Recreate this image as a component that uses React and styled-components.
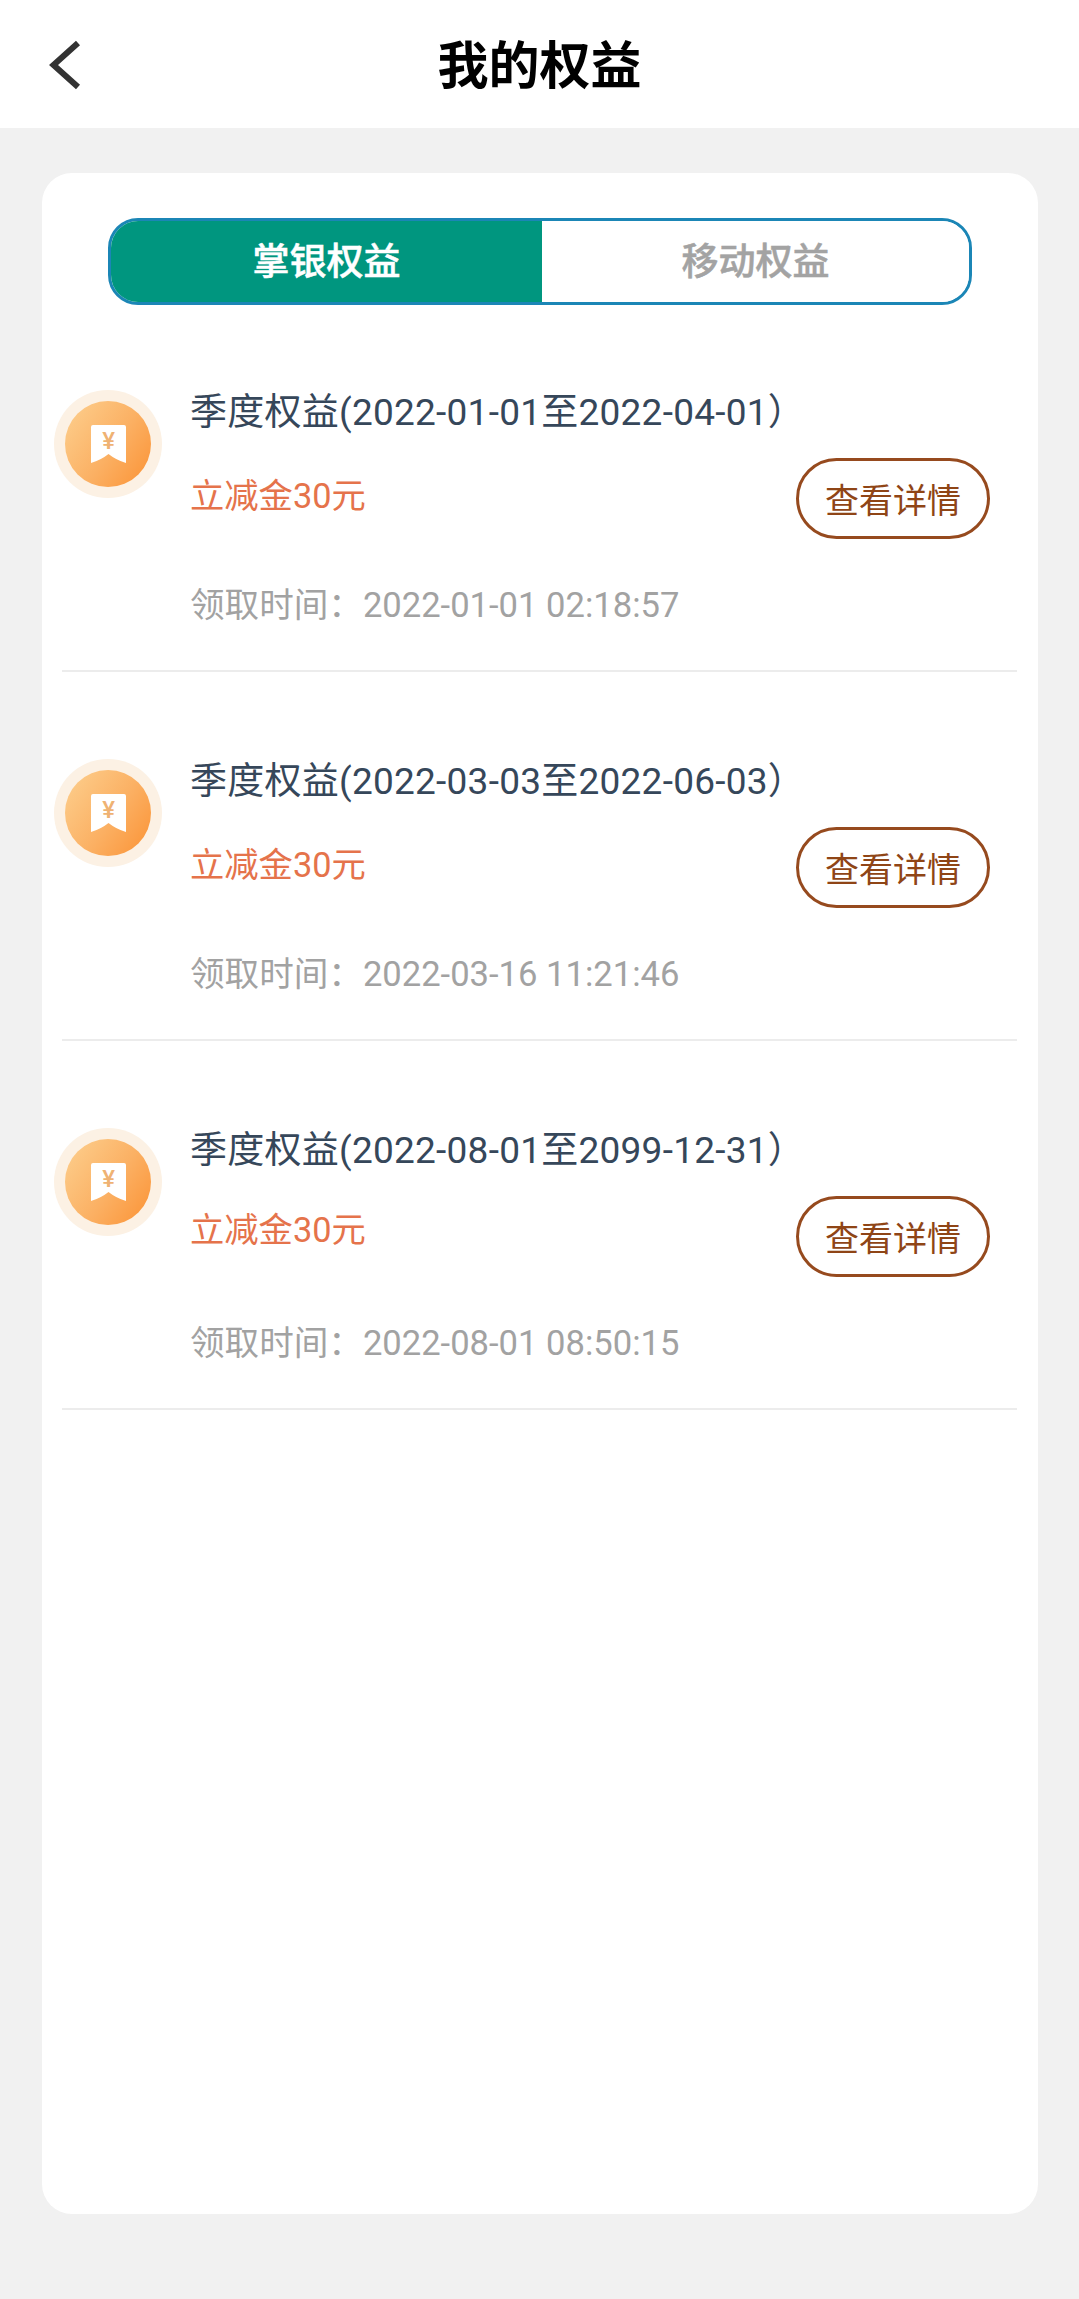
import React from "react"
import styled, { createGlobalStyle } from "styled-components"

const GlobalStyle = createGlobalStyle`
  html, body {
    margin: 0;
    padding: 0;
    background: #f1f1f1;
  }
  * {
    box-sizing: border-box;
  }
  body {
    font-family: Roboto, "Noto Sans CJK SC", sans-serif;
  }
`

const benefits = [
  { id: 1, range: "2022-01-01至2022-04-01", amount: "立减金30元", time: "2022-01-01 02:18:57" },
  { id: 2, range: "2022-03-03至2022-06-03", amount: "立减金30元", time: "2022-03-16 11:21:46" },
  { id: 3, range: "2022-08-01至2099-12-31", amount: "立减金30元", time: "2022-08-01 08:50:15", tight: true },
]

const BenefitIcon = () => (
  <Halo>
    <Coin>
      <svg width="35" height="38" viewBox="0 0 35 38">
        <path d="M2 0H33a2 2 0 0 1 2 2V38Q25 35 17.5 29 10 35 0 38V2a2 2 0 0 1 2-2Z" fill="#fff" />
        <text x="17.5" y="24" textAnchor="middle" fontSize="24" fontWeight="500" fill="#efb273" fontFamily="Roboto, sans-serif">¥</text>
      </svg>
    </Coin>
  </Halo>
)

const App = () => {
  return (
    <Page>
      <GlobalStyle />
      <Header>
        <BackButton aria-label="back">
          <svg width="33" height="50" viewBox="0 0 33 50" fill="none">
            <path d="M30 3 5.5 25 30 47" stroke="#333" strokeWidth="6" />
          </svg>
        </BackButton>
        <Title>我的权益</Title>
      </Header>
      <Card>
        <Tabs>
          <Tab $active>掌银权益</Tab>
          <Tab>移动权益</Tab>
        </Tabs>
        <List>
          {benefits.map((item) => (
            <Row key={item.id}>
              <RowBody>
                <BenefitIcon />
                <Info>
                  <RowTitle>季度权益({item.range}）</RowTitle>
                  <Middle>
                    <Amount $tight={item.tight}>{item.amount}</Amount>
                    <DetailButton>查看详情</DetailButton>
                  </Middle>
                  <Time>领取时间：{item.time}</Time>
                </Info>
              </RowBody>
              <Divider />
            </Row>
          ))}
        </List>
      </Card>
    </Page>
  )
}

export default App

const Page = styled.div`
  width: 100%;
  min-height: 2299px;
  background: #f1f1f1;
`

const Header = styled.header`
  position: relative;
  display: flex;
  align-items: center;
  justify-content: center;
  height: 128px;
  background: #fff;
`

const BackButton = styled.button`
  position: absolute;
  left: 48px;
  top: 40px;
  display: flex;
  padding: 0;
  border: 0;
  background: none;
`

const Title = styled.h1`
  margin: 6px 0 0;
  font-size: 51px;
  line-height: 60px;
  font-weight: 700;
  color: #000;
`

const Card = styled.main`
  width: 996px;
  height: 2041px;
  margin: 45px 0 0 42px;
  padding-top: 45px;
  background: #fff;
  border-radius: 30px;
`

const Tabs = styled.div`
  display: flex;
  width: 864px;
  height: 87px;
  margin-left: 66px;
  border: 3px solid #1b86b6;
  border-radius: 30px;
  overflow: hidden;
`

const Tab = styled.div`
  flex: ${(p) => (p.$active ? "0 0 431px" : "1")};
  display: flex;
  align-items: center;
  justify-content: center;
  padding-bottom: 6px;
  font-size: 37px;
  font-weight: 500;
  -webkit-text-stroke: 0.5px ${(p) => (p.$active ? "#fff" : "#a3a3a3")};
  color: ${(p) => (p.$active ? "#fff" : "#a3a3a3")};
  background: ${(p) => (p.$active ? "#00967f" : "#fff")};
`

const List = styled.div`
  display: flex;
  flex-direction: column;
  gap: 2px;
`

const Row = styled.section`
  display: flex;
  flex-direction: column;
  height: 367px;
`

const RowBody = styled.div`
  flex: 1;
  display: flex;
  gap: 28px;
  padding: 83px 48px 0 12px;
`

const Divider = styled.div`
  height: 2px;
  margin: 0 21px 0 20px;
  background: #ececec;
`

const Halo = styled.div`
  flex: none;
  display: flex;
  align-items: center;
  justify-content: center;
  width: 108px;
  height: 108px;
  margin-top: 2px;
  border-radius: 50%;
  background: #fcf1e4;
`

const Coin = styled.div`
  display: flex;
  align-items: center;
  justify-content: center;
  width: 86px;
  height: 86px;
  border-radius: 50%;
  background: linear-gradient(125deg, #fdd08f 0%, #fbb063 55%, #fb9234 100%);
`

const Info = styled.div`
  flex: 1;
  display: flex;
  flex-direction: column;
`

const RowTitle = styled.div`
  font-size: 37px;
  letter-spacing: 0.25px;
  line-height: 50px;
  color: #36475a;
  white-space: nowrap;
`

const Middle = styled.div`
  display: flex;
  justify-content: space-between;
  align-items: flex-start;
  margin-top: 20px;
`

const Amount = styled.div`
  margin-top: ${(p) => (p.$tight ? "9px" : "13px")};
  font-size: 34.3px;
  line-height: 50px;
  color: #e5734b;
`

const DetailButton = styled.button`
  width: 194px;
  height: 81px;
  padding: 0;
  border: 3px solid #964a1e;
  border-radius: 41px;
  background: #fff;
  font-family: inherit;
  font-size: 34px;
  color: #8f4516;
`

const Time = styled.div`
  margin-top: 41px;
  font-size: 34.6px;
  line-height: 50px;
  color: #a2a2a2;
`
